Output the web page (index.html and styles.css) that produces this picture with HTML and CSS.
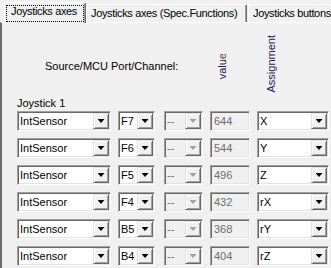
FILE: index.html
```html
<!DOCTYPE html>
<html>
<head>
<meta charset="utf-8">
<link rel="stylesheet" href="styles.css">
</head>
<body>
<div class="tabs">
  <div class="tab active"><span class="focus">Joysticks axes</span></div>
  <div class="tab t2">Joysticks axes (Spec.Functions)</div>
  <div class="tab t3">Joysticks buttons</div>
</div>
<div class="panel">
  <div class="header">
    <div class="src">Source/MCU Port/Channel:</div>
    <div class="vlabel value">valu<span class="e">e</span></div>
    <div class="vlabel assign">Assignment</div>
  </div>
  <div class="group">Joystick 1</div>
  <div class="rows">
    <div class="row">
      <div class="combo c1"><span class="txt">IntSensor</span><span class="btn"><i class="arr"></i></span></div>
      <div class="combo c2"><span class="txt">F7</span><span class="btn"><i class="arr"></i></span></div>
      <div class="combo c3 dis"><span class="txt">--</span><span class="btn"><i class="arr"></i></span></div>
      <div class="edit">644</div>
      <div class="combo c5"><span class="txt">X</span><span class="btn"><i class="arr"></i></span></div>
    </div>
    <div class="row">
      <div class="combo c1"><span class="txt">IntSensor</span><span class="btn"><i class="arr"></i></span></div>
      <div class="combo c2"><span class="txt">F6</span><span class="btn"><i class="arr"></i></span></div>
      <div class="combo c3 dis"><span class="txt">--</span><span class="btn"><i class="arr"></i></span></div>
      <div class="edit">544</div>
      <div class="combo c5"><span class="txt">Y</span><span class="btn"><i class="arr"></i></span></div>
    </div>
    <div class="row">
      <div class="combo c1"><span class="txt">IntSensor</span><span class="btn"><i class="arr"></i></span></div>
      <div class="combo c2"><span class="txt">F5</span><span class="btn"><i class="arr"></i></span></div>
      <div class="combo c3 dis"><span class="txt">--</span><span class="btn"><i class="arr"></i></span></div>
      <div class="edit">496</div>
      <div class="combo c5"><span class="txt">Z</span><span class="btn"><i class="arr"></i></span></div>
    </div>
    <div class="row">
      <div class="combo c1"><span class="txt">IntSensor</span><span class="btn"><i class="arr"></i></span></div>
      <div class="combo c2"><span class="txt">F4</span><span class="btn"><i class="arr"></i></span></div>
      <div class="combo c3 dis"><span class="txt">--</span><span class="btn"><i class="arr"></i></span></div>
      <div class="edit">432</div>
      <div class="combo c5"><span class="txt">rX</span><span class="btn"><i class="arr"></i></span></div>
    </div>
    <div class="row">
      <div class="combo c1"><span class="txt">IntSensor</span><span class="btn"><i class="arr"></i></span></div>
      <div class="combo c2"><span class="txt">B5</span><span class="btn"><i class="arr"></i></span></div>
      <div class="combo c3 dis"><span class="txt">--</span><span class="btn"><i class="arr"></i></span></div>
      <div class="edit">368</div>
      <div class="combo c5"><span class="txt">rY</span><span class="btn"><i class="arr"></i></span></div>
    </div>
    <div class="row">
      <div class="combo c1"><span class="txt">IntSensor</span><span class="btn"><i class="arr"></i></span></div>
      <div class="combo c2"><span class="txt">B4</span><span class="btn"><i class="arr"></i></span></div>
      <div class="combo c3 dis"><span class="txt">--</span><span class="btn"><i class="arr"></i></span></div>
      <div class="edit">404</div>
      <div class="combo c5"><span class="txt">rZ</span><span class="btn"><i class="arr"></i></span></div>
    </div>
  </div>
</div>
</body>
</html>
```
FILE: styles.css
```css
html, body {
  margin: 0;
  padding: 0;
}
body {
  width: 331px;
  height: 268px;
  overflow: hidden;
  background: #f0f0f0;
  font-family: "Liberation Sans", Arial, sans-serif;
  font-size: 11px;
  color: #000;
}

/* tabs */
.tabs {
  display: flex;
  align-items: flex-end;
  height: 22px;
  position: relative;
  z-index: 1;
  letter-spacing: -0.35px;
}
.tab {
  box-sizing: border-box;
  height: 18px;
  padding: 2px 0 0 4px;
  line-height: 13px;
  white-space: nowrap;
  overflow: hidden;
  background: #f0f0f0;
  border-top: 1px solid #fff;
  border-left: 1px solid #fff;
  border-right: 1px solid #696969;
  box-shadow: inset -1px 0 #a0a0a0;
  border-radius: 2px 2px 0 0;
}
.tab.active {
  height: 21px;
  width: 82px;
  margin-left: 4px;
  margin-bottom: -1px;
  padding: 2px 0 0 1px;
}
.focus {
  display: inline-block;
  box-sizing: border-box;
  width: 78px;
  height: 17px;
  border: 1px dotted #000;
  padding: 0 0 0 4px;
  line-height: 11px;
}
.t2 {
  width: 161px;
}
.t3 {
  flex: 1;
  margin-left: 1px;
  border-right: none;
  box-shadow: none;
}

/* panel */
.panel {
  height: 246px;
  border-top: 1px solid #fff;
  border-left: 2px solid #6b6b6b;
  box-sizing: border-box;
}
.header {
  display: flex;
  align-items: flex-start;
  height: 74px;
}
.src {
  margin: 37px 0 0 43px;
  width: 173px;
  line-height: 13px;
}
.vlabel {
  writing-mode: vertical-rl;
  transform: rotate(180deg);
  line-height: 9px;
  color: #1e1e52;
}
.value {
  margin-top: 30px;
}
.value .e {
  color: #7a4018;
}
.assign {
  margin: 12px 0 0 40px;
}
.group {
  height: 14px;
  line-height: 13px;
  padding-left: 15px;
}

/* rows */
.rows {
  display: flex;
  flex-direction: column;
  gap: 7px;
  padding-left: 15px;
}
.row {
  display: flex;
  height: 20px;
}
.combo, .edit {
  box-sizing: border-box;
  height: 20px;
  border: 1px solid;
  border-color: #a0a0a0 #fff #fff #a0a0a0;
  box-shadow: inset 1px 1px #696969, inset -1px -1px #e3e3e3;
  background: #fff;
  padding: 1px;
}
.combo {
  display: flex;
}
.txt {
  flex: 1;
  line-height: 16px;
  padding-left: 1px;
  white-space: nowrap;
  overflow: hidden;
}
.btn {
  box-sizing: border-box;
  width: 16px;
  height: 16px;
  border: 1px solid;
  border-color: #e3e3e3 #696969 #696969 #e3e3e3;
  box-shadow: inset 1px 1px #fff, inset -1px -1px #a0a0a0;
  background: #f0f0f0;
  display: flex;
  align-items: center;
  justify-content: center;
}
.arr {
  display: block;
  width: 7px;
  height: 4px;
  background: #000;
  clip-path: polygon(0 0, 100% 0, 50% 100%);
}
.c1 { width: 94px; }
.c2 { width: 37px; margin-left: 7px; }
.c3 { width: 39px; margin-left: 9px; }
.edit {
  width: 40px;
  margin-left: 7px;
  background: #f0f0f0;
  color: #6d6d6d;
  line-height: 16px;
  padding-left: 3px;
}
.c5 { width: 72px; margin-left: 7px; }
.dis {
  background: #f0f0f0;
  color: #6d6d6d;
}
.dis .arr {
  background: #a0a0a0;
}
```
